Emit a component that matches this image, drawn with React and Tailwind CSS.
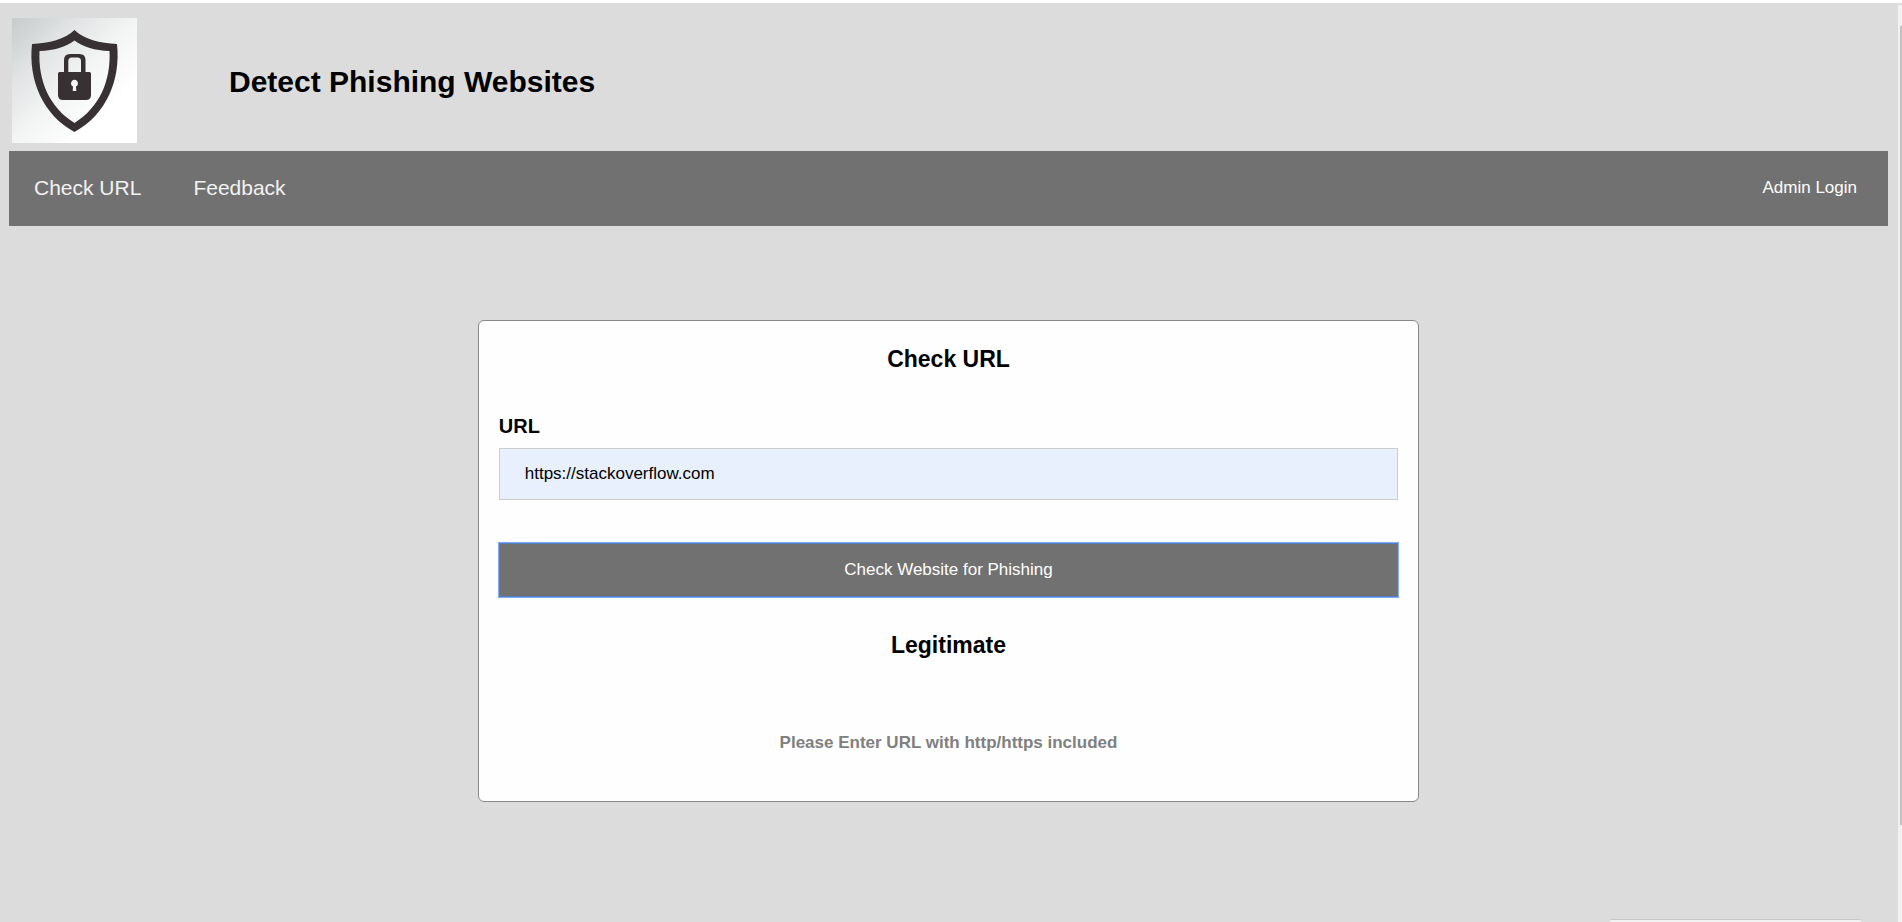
function ShieldLogo() {
  return (
    <svg viewBox="0 0 125 125" className="size-[125px] shrink-0" role="img" aria-label="Shield with padlock">
      <defs>
        <linearGradient id="sheen" x1="0" y1="0" x2="1" y2="1">
          <stop offset="0" stopColor="#c6cbcc" />
          <stop offset="0.25" stopColor="#e0e2e3" />
          <stop offset="0.5" stopColor="#f3f4f4" />
          <stop offset="0.75" stopColor="#ffffff" />
        </linearGradient>
      </defs>
      <rect width="125" height="125" fill="url(#sheen)" />
      <path
        fillRule="evenodd"
        fill="#373133"
        d="M62.5 12C72 21 88 25.5 105 26C109 62 94 97 62.5 114C31 97 16 62 20 26C37 25.5 53 21 62.5 12ZM62.5 22.5C54 29 42 32.5 27.500 33C26 62 37 89 62.5 105C88 89 99 62 97.500 33C83 32.5 71 29 62.5 22.5Z"
      />
      <path
        fillRule="evenodd"
        fill="#373133"
        d="M52 54V42Q52 36 58 36H67.5Q73.5 36 73.5 42V54H77.5Q79 54 79 55.5V77Q79 82 74 82H51Q46 82 46 77V55.500Q46 54 47.5 54ZM56.300 54H69V43Q69 39.500 65.500 39.500H59.800Q56.300 39.500 56.300 43ZM61 68.500L60.700 73H64.300L64 68.500A3.500 3.500 0 1 0 61 68.500Z"
      />
    </svg>
  );
}

export default function App() {
  return (
    <div className="relative flex min-h-screen overflow-hidden border-t-[3px] border-white bg-[#dcdcdc] font-['Liberation_Sans',Arial,sans-serif] text-black">
      <div className="min-w-0 flex-1 pr-2.5 pl-[9px]">
        <header className="flex items-center pt-[15px] pb-2 pl-[3px]">
          <ShieldLogo />
          <h1 className="pt-0.5 pl-[92px] text-[30px] leading-9 font-bold">Detect Phishing Websites</h1>
        </header>

        <nav className="flex h-[75px] items-center bg-[#717171] px-[25px] pb-0.5 text-[21px] text-[#f2f2f2]">
          <a href="#check">Check URL</a>
          <a href="#feedback" className="ml-[52px]">Feedback</a>
          <a href="#admin" className="mr-1.5 ml-auto text-[17px] text-white">Admin Login</a>
        </nav>

        <main className="pt-[94px]">
          <form
            className="mx-auto flex w-[calc(50%+2px)] flex-col rounded-[6px] border border-[#888888] bg-[#fefefe] px-5 pt-6 pb-[46px]"
            onSubmit={(event) => event.preventDefault()}
          >
            <h2 className="text-center text-[23px] leading-7 font-bold">Check URL</h2>
            <label htmlFor="url" className="mt-[41px] text-xl leading-6 font-bold">URL</label>
            <input
              id="url"
              type="text"
              defaultValue="https://stackoverflow.com"
              className="mt-2.5 h-[52px] w-full border border-[#cccccc] bg-[#e8f0fe] px-[25px] text-[17px] outline-none"
            />
            <button
              type="submit"
              className="mt-[43px] h-[54px] w-full bg-[#717171] text-[17px] text-white shadow-[0_0_0_1px_#7eabf5,inset_0_0_0_1px_#4f7fc8]"
            >
              Check Website for Phishing
            </button>
            <p className="mt-[34px] text-center text-[23px] leading-7 font-bold">Legitimate</p>
            <p className="mt-[72px] text-center text-[17px] leading-6 font-bold text-[#808080]">
              Please Enter URL with http/https included
            </p>
          </form>
        </main>
      </div>

      <div className="mt-0.5 w-1 bg-[#f1f1f1] pt-[21px] pl-0.5">
        <div className="h-[799px] bg-[#c1c1c1]" />
      </div>

      <div className="absolute right-10 bottom-0 h-[3px] w-[253px] rounded-t-[4px] border-t border-[#c8c8c8] bg-[#f2f2f2]" />
    </div>
  );
}
